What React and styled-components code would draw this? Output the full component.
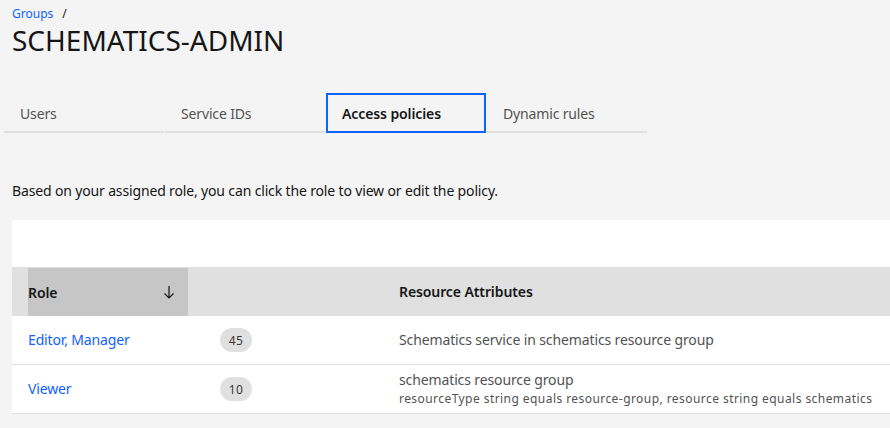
import React from "react";
import styled, { createGlobalStyle } from "styled-components";

const GlobalStyle = createGlobalStyle`
  html, body {
    margin: 0;
    padding: 0;
    background: #f4f4f4;
    overflow: hidden;
  }
  body {
    font-family: "Noto Sans", "Open Sans", Arial, sans-serif;
    color: #161616;
  }
`;

const Page = styled.div`
  width: 890px;
  height: 428px;
  overflow: hidden;
  padding: 6px 0 0 12px;
  box-sizing: border-box;
`;

const Breadcrumb = styled.div`
  display: flex;
  gap: 9px;
  font-size: 12px;
  line-height: 16px;
  color: #161616;
`;

const Crumb = styled.a`
  color: #0f62fe;
  text-decoration: none;
`;

const Title = styled.h1`
  margin: 0;
  font-size: 28px;
  line-height: 36px;
  font-weight: 400;
  color: #161616;
`;

const Tabs = styled.div`
  display: flex;
  gap: 1px;
  margin: 35px 0 0 -8px;
`;

const Tab = styled.div`
  width: 160px;
  height: 40px;
  box-sizing: border-box;
  padding: 2px 16px 0;
  display: flex;
  align-items: center;
  font-size: 14px;
  letter-spacing: ${(p) => (p.$active ? "-0.1px" : "-0.15px")};
  color: ${(p) => (p.$active ? "#161616" : "#525252")};
  font-weight: ${(p) => (p.$active ? 600 : 400)};
  border-bottom: 2px solid #e0e0e0;
  outline: ${(p) => (p.$active ? "2px solid #0f62fe" : "none")};
  outline-offset: -2px;
`;

const Description = styled.p`
  margin: 48px 0 0;
  font-size: 14px;
  line-height: 20px;
  letter-spacing: -0.15px;
  color: #161616;
`;

const Card = styled.div`
  margin-top: 19px;
  width: 1000px;
  background: #ffffff;
`;

const Toolbar = styled.div`
  height: 47px;
`;

const Row = styled.div`
  display: grid;
  grid-template-columns: 16px 160px 195px 1fr;
  height: ${(p) => (p.$head ? "49px" : "48px")};
  background: ${(p) => (p.$head ? "#e0e0e0" : "#ffffff")};
  border-bottom: ${(p) => (p.$head ? "none" : "1px solid #e0e0e0")};
`;

const Cell = styled.div`
  display: flex;
  flex-direction: ${(p) => (p.$stack ? "column" : "row")};
  justify-content: ${(p) => (p.$stack ? "center" : "flex-start")};
  align-items: ${(p) => (p.$stack ? "flex-start" : "center")};
  gap: 1px;
  padding-left: ${(p) => p.$pad || 0}px;
  padding-bottom: ${(p) => (p.$stack ? 1 : 0)}px;
  font-size: 14px;
  color: #525252;
`;

const SortCell = styled.div`
  display: flex;
  align-items: center;
  justify-content: space-between;
  padding-right: 13px;
  margin-top: 1px;
  background: #c6c6c6;
`;

const HeadLabel = styled.span`
  font-size: 14px;
  font-weight: 600;
  letter-spacing: -0.1px;
  color: #161616;
`;

const RoleLink = styled.a`
  color: #0f62fe;
  font-size: 14px;
  letter-spacing: -0.15px;
  text-decoration: none;
  margin-top: -1px;
`;

const Badge = styled.span`
  display: inline-flex;
  align-items: center;
  justify-content: center;
  width: 32px;
  height: 24px;
  border-radius: 12px;
  background: #e0e0e0;
  color: #393939;
  font-size: 12px;
  letter-spacing: 0.3px;
`;

const Line = styled.span`
  font-size: ${(p) => (p.$small ? "12px" : "14px")};
  line-height: ${(p) => (p.$small ? "16px" : "20px")};
  letter-spacing: ${(p) => (p.$small ? "0.44px" : "-0.12px")};
  color: #525252;
`;

const ArrowDown = () => (
  <svg width="12" height="14" viewBox="0 0 12 14" fill="none" stroke="#161616" strokeWidth="1.2">
    <path d="M6 1v12M1.5 8.5 6 13l4.5-4.5" />
  </svg>
);

const policies = [
  { role: "Editor, Manager", count: 45, lines: ["Schematics service in schematics resource group"] },
  {
    role: "Viewer",
    count: 10,
    lines: ["schematics resource group", "resourceType string equals resource-group, resource string equals schematics"],
  },
];

export default function App() {
  return (
    <Page>
      <GlobalStyle />
      <Breadcrumb>
        <Crumb href="#">Groups</Crumb>
        <span>/</span>
      </Breadcrumb>
      <Title>SCHEMATICS-ADMIN</Title>
      <Tabs>
        <Tab>Users</Tab>
        <Tab>Service IDs</Tab>
        <Tab $active>Access policies</Tab>
        <Tab>Dynamic rules</Tab>
      </Tabs>
      <Description>Based on your assigned role, you can click the role to view or edit the policy.</Description>
      <Card>
        <Toolbar />
        <Row $head>
          <div />
          <SortCell>
            <HeadLabel>Role</HeadLabel>
            <ArrowDown />
          </SortCell>
          <div />
          <Cell $pad={16}>
            <HeadLabel>Resource Attributes</HeadLabel>
          </Cell>
        </Row>
        {policies.map((p) => (
          <Row key={p.role}>
            <div />
            <Cell>
              <RoleLink href="#">{p.role}</RoleLink>
            </Cell>
            <Cell $pad={32}>
              <Badge>{p.count}</Badge>
            </Cell>
            <Cell $pad={16} $stack>
              {p.lines.map((l, i) => (
                <Line key={i} $small={i > 0}>{l}</Line>
              ))}
            </Cell>
          </Row>
        ))}
      </Card>
    </Page>
  );
}
